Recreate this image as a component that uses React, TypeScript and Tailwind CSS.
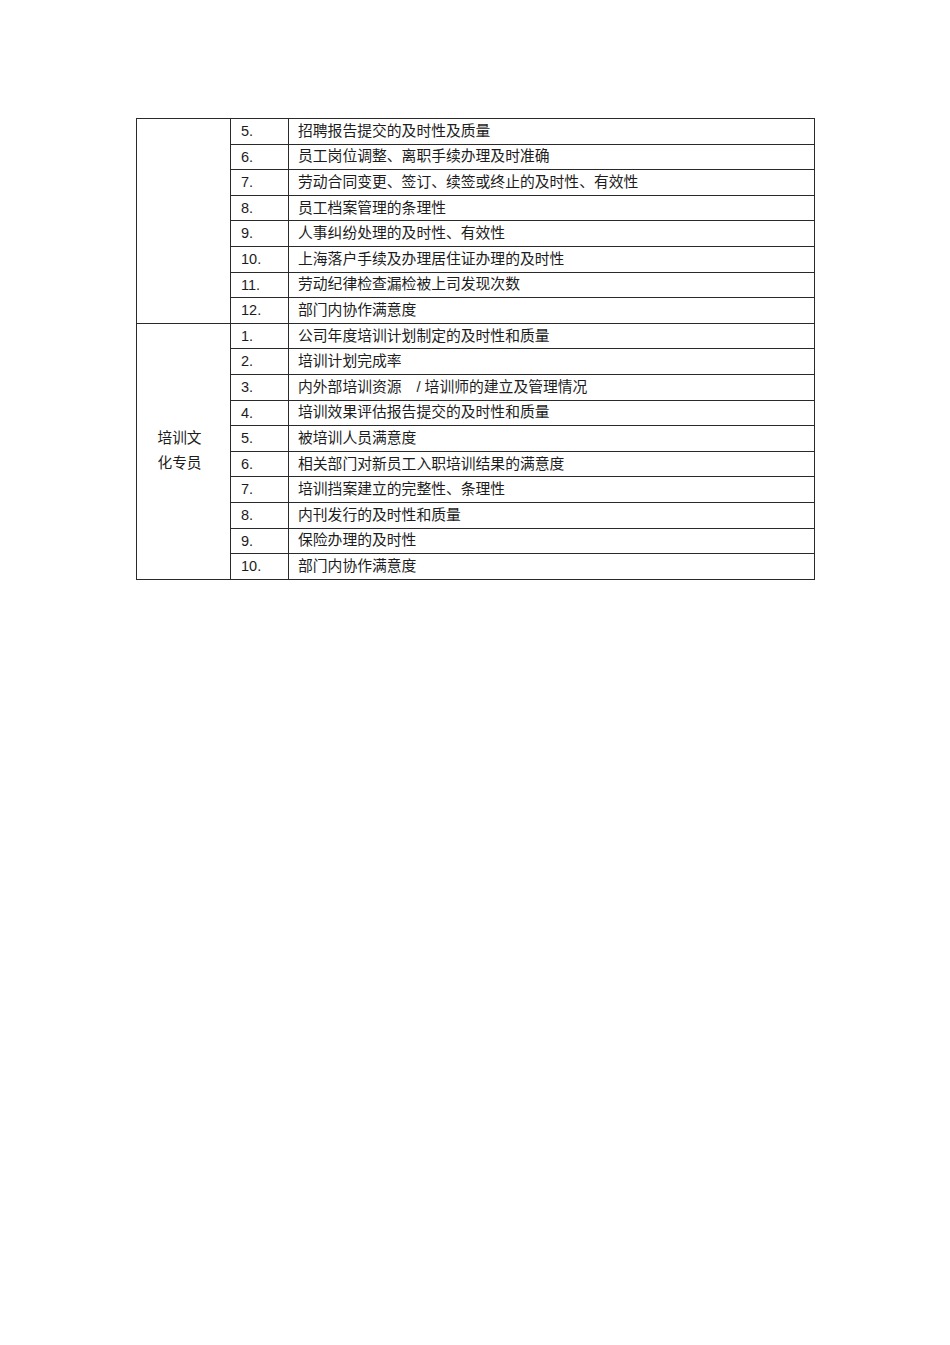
const GROUPS: { title: string[]; items: [string, string][] }[] = [
  {
    title: [],
    items: [
      ['5.', '招聘报告提交的及时性及质量'],
      ['6.', '员工岗位调整、离职手续办理及时准确'],
      ['7.', '劳动合同变更、签订、续签或终止的及时性、有效性'],
      ['8.', '员工档案管理的条理性'],
      ['9.', '人事纠纷处理的及时性、有效性'],
      ['10.', '上海落户手续及办理居住证办理的及时性'],
      ['11.', '劳动纪律检查漏检被上司发现次数'],
      ['12.', '部门内协作满意度'],
    ],
  },
  {
    title: ['培训文', '化专员'],
    items: [
      ['1.', '公司年度培训计划制定的及时性和质量'],
      ['2.', '培训计划完成率'],
      ['3.', '内外部培训资源　/ 培训师的建立及管理情况'],
      ['4.', '培训效果评估报告提交的及时性和质量'],
      ['5.', '被培训人员满意度'],
      ['6.', '相关部门对新员工入职培训结果的满意度'],
      ['7.', '培训挡案建立的完整性、条理性'],
      ['8.', '内刊发行的及时性和质量'],
      ['9.', '保险办理的及时性'],
      ['10.', '部门内协作满意度'],
    ],
  },
];

export default function App() {
  return (
    <div className="w-[950px] min-h-[1345px] bg-white pt-[118px] pl-[136px]">
      <table
        className="w-[679px] border-collapse text-[#1c1c1c]"
        style={{ fontFamily: '"Liberation Sans", "Noto Sans CJK SC", sans-serif' }}
      >
        <colgroup>
          <col className="w-[94px]" />
          <col className="w-[58px]" />
          <col />
        </colgroup>
        <tbody>
          {GROUPS.map((g, gi) =>
            g.items.map(([num, text], i) => (
              <tr key={`${gi}-${i}`} className="h-[25.6px]">
                {i === 0 && (
                  <td
                    rowSpan={g.items.length}
                    className="border border-[#2a2a2a] pr-[8px] text-center align-middle text-[14.7px] leading-[25px]"
                  >
                    {g.title.map((t) => (
                      <div key={t}>{t}</div>
                    ))}
                  </td>
                )}
                <td className="border border-[#2a2a2a] pl-[10px] text-[14.5px] leading-none p-0 align-middle">
                  {num}
                </td>
                <td className="border border-[#2a2a2a] pl-[9px] text-[14.8px] leading-none p-0 align-middle">
                  {text}
                </td>
              </tr>
            ))
          )}
        </tbody>
      </table>
    </div>
  );
}
